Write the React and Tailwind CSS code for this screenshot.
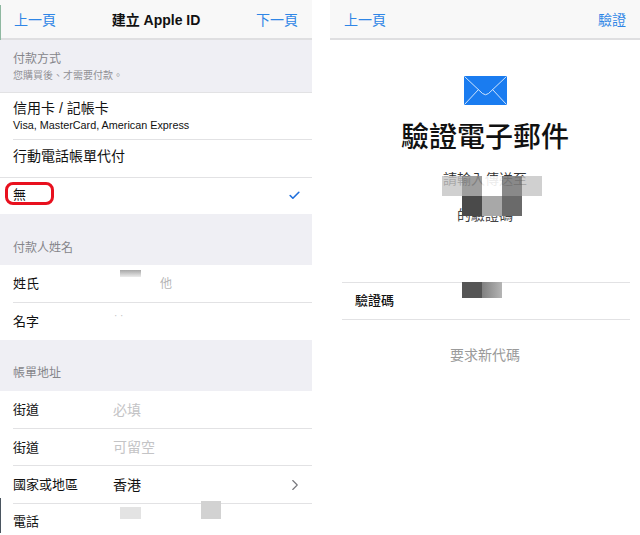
import { ChevronRight, Check } from 'lucide-react';

const FONT = 'font-["Liberation_Sans","Noto_Sans_CJK_TC",sans-serif]';

const Row = ({ label, value, muted, className = 'h-[38px]', last, children }) => (
  <div className={`relative flex items-center pl-[13px] ${className}`}>
    <span className="w-[100px] text-[13px] text-[#111]">{label}</span>
    {value && <span className={`text-[14px] ${muted ? 'text-[#c4c4c6]' : 'text-[#111]'}`}>{value}</span>}
    {children}
    {!last && <div className="absolute left-[13px] right-0 bottom-0 h-px bg-[#e2e2e4]" />}
  </div>
);

const Section = ({ title, className }) => (
  <div className={`flex flex-col justify-end bg-[#efeff4] pl-[13px] text-[12px] text-[#85858a] ${className}`}>
    {title}
  </div>
);

const Nav = ({ left, title, right }) => (
  <div className="flex h-[40px] items-center justify-between border-b-2 border-[#dfdfe1] bg-[#f8f8f8] px-[14px] pt-[2px] text-[14px] text-[#2f86e6]">
    <span>{left}</span>
    {title && <span className="font-semibold text-[#111]">{title}</span>}
    <span>{right}</span>
  </div>
);

const MOSAIC = [
  'bg-[#c4c4c4]/80', 'bg-[#8e8e8e]/85', 'bg-white/90', 'bg-[#7c7c7c]/90', 'bg-[#c4c4c4]/80',
  'bg-transparent', 'bg-[#4a4a4a]', 'bg-[#a8a8a8]', 'bg-[#6a6a6a]', 'bg-transparent',
];

export default function App() {
  return (
    <div className={`flex h-[535px] w-[640px] overflow-hidden bg-white ${FONT}`}>
      {/* 建立 Apple ID */}
      <div className="relative w-[312px] shrink-0">
        <Nav left="上一頁" title="建立 Apple ID" right="下一頁" />
        <div className="flex h-[53px] flex-col justify-center gap-[2px] border-b border-[#e2e2e4] bg-[#efeff4] pl-[13px] pt-[2px]">
          <span className="text-[12px] leading-[16px] text-[#85858a]">付款方式</span>
          <span className="text-[10px] leading-[14px] text-[#8f8f94]">您購買後、才需要付款。</span>
        </div>
        <div className="relative flex h-[47px] flex-col justify-center pl-[13px] pb-[2px] text-[#111]">
          <span className="text-[14px] leading-[19px]">信用卡 / 記帳卡</span>
          <span className="text-[10.8px] leading-[14px]">Visa, MasterCard, American Express</span>
          <div className="absolute left-[13px] right-0 bottom-0 h-px bg-[#e2e2e4]" />
        </div>
        <div className="relative flex h-[38px] items-center pl-[13px] pb-[6px] text-[14px] text-[#111]">
          行動電話帳單代付
          <div className="absolute left-0 right-0 bottom-0 h-px bg-[#e2e2e4]" />
        </div>
        <div className="relative flex h-[36px] items-center justify-between pl-[13px] pr-[11px] pb-[2px] text-[13px] text-[#111]">
          無
          <Check className="h-[13px] w-[13px] text-[#1f6fdc]" strokeWidth={3} />
          <div className="absolute left-[5px] top-[4px] h-[23px] w-[49px] rounded-lg border-[3px] border-[#e8101e]" />
        </div>
        <Section title="付款人姓名" className="h-[51px] pb-[8px]" />
        <Row label="姓氏">
          <div className="absolute left-[120px] top-[5px] h-[7px] w-[21px] bg-gradient-to-b from-[#a8a8a8] to-[#ececec]" />
          <span className="absolute left-[160px] top-[10px] text-[12px] text-[#b5b5b5]">他</span>
        </Row>
        <Row label="名字" className="h-[37px]" last>
          <span className="absolute left-[114px] top-[8px] text-[10px] leading-none text-[#c4c4c4]">· ·</span>
        </Row>
        <Section title="帳單地址" className="h-[51px] pb-[9px]" />
        <Row label="街道" value="必填" muted />
        <Row label="街道" value="可留空" muted className="h-[37px]" />
        <Row label="國家或地區" value="香港">
          <ChevronRight className="ml-auto mr-[8px] h-[18px] w-[18px] text-[#77777c]" strokeWidth={1.5} />
        </Row>
        <Row label="電話" className="h-[31px] pt-[5px]" last>
          <div className="absolute left-[120px] top-[3px] h-[12px] w-[21px] bg-[#e3e3e3]" />
          <div className="absolute left-[201px] top-[-3px] h-[18px] w-[20px] bg-[#d2d2d2]" />
        </Row>
        <div className="absolute left-0 top-[5px] h-[35px] w-px bg-[#8fb8a0]" />
        <div className="absolute bottom-[2px] left-0 h-[35px] w-px bg-[#4a5560]" />
      </div>

      {/* 驗證電子郵件 */}
      <div className="ml-[18px] flex w-[310px] flex-col">
        <Nav left="上一頁" right="驗證" />
        <div className="relative flex flex-col items-center">
          <svg className="mt-[36px]" width="43" height="29" viewBox="0 0 43 29">
            <rect width="43" height="29" fill="#1a7cf0" />
            <path d="M0.5 0.5 L18.5 17.5 Q21.5 20 24.5 17.5 L42.5 0.5 M0.5 28.5 L14.5 13.5 M42.5 28.5 L28.5 13.5" fill="none" stroke="#cfe4fc" strokeWidth="1" />
          </svg>
          <h1 className="mt-[14px] text-[28px] leading-[38px] font-medium text-[#111]">驗證電子郵件</h1>
          <p className="mt-[12px] text-[14px] leading-[20px] text-[#333]">請輸入傳送至</p>
          <p className="mt-[16px] text-[14px] leading-[20px] text-[#444]">的驗證碼</p>
          <div className="absolute left-[112px] top-[136px] grid w-[100px] grid-cols-5">
            {MOSAIC.map((c, i) => (
              <div key={i} className={`h-[20px] ${c}`} />
            ))}
          </div>
        </div>
        <div className="relative ml-[12px] mr-[10px] mt-[57px] flex h-[38px] items-center border-y border-[#e2e2e4] pl-[13px] text-[13px] font-medium text-[#111]">
          驗證碼
          <div className="absolute left-[120px] top-[-1px] flex h-[16px]">
            <div className="w-[20px] bg-[#555]" />
            <div className="w-[20px] bg-gradient-to-r from-[#808080] to-[#b5b5b5]" />
          </div>
        </div>
        <div className="mt-[25px] text-center text-[14px] leading-[20px] text-[#9a9a9a]">要求新代碼</div>
      </div>
    </div>
  );
}
